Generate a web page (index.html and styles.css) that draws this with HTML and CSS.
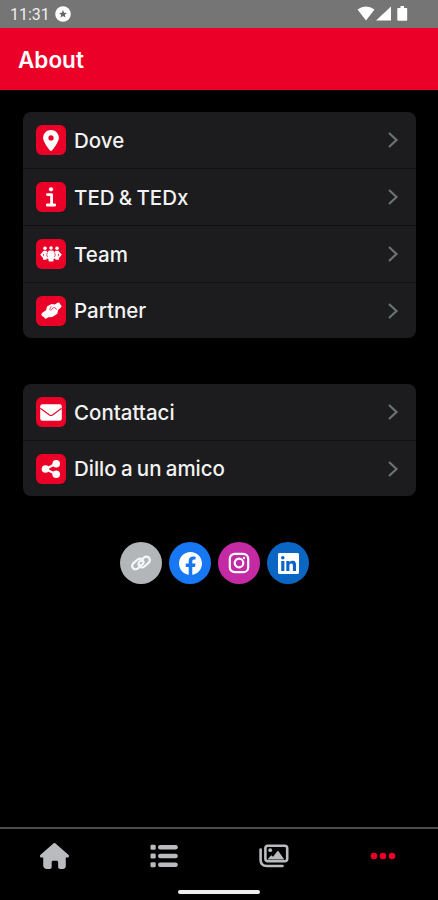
FILE: index.html
```html
<!DOCTYPE html>
<html lang="it">
<head>
    <meta charset="UTF-8">
    <meta name="viewport" content="width=device-width, initial-scale=1.0">
    <title>About</title>
    <link rel="stylesheet" href="styles.css">
</head>
<body>
    <!-- Status bar -->
    <div class="status">
        <span class="time">11:31</span>
        <svg class="star" width="16" height="16" viewBox="0 0 16 16">
            <circle cx="8" cy="8" r="7.8" fill="#fff"/>
            <path d="M8 4l1.100 2.700 2.900.2-2.200 1.900.7 2.800L8 10.100l-2.500 1.500.7-2.800L4 6.900l2.900-.2z" fill="#666"/>
        </svg>
        <svg class="signals" width="52" height="18" viewBox="0 0 52 18">
            <path d="M.5 4.500Q9 -1.500 17.500 4.500L9 15.500z"/>
            <path d="M34 1.500V15.500H19z"/>
            <path d="M41 3h2.500V1h3.500v2h2.500q.7 0 .7.700v11.100q0 1-1 1h-7.900q-1 0-1-1V3.700q0-.7.700-.7z"/>
        </svg>
    </div>

    <header class="header">
        <h1>About</h1>
    </header>

    <main class="content">
        <div class="card">
            <div class="row">
                <span class="icon">
                    <svg width="16" height="21" viewBox="0 0 384 512"><path d="M192 0C86 0 0 86 0 192c0 87 117 243 168 307 12 15 36 15 48 0 51-64 168-220 168-307C384 86 298 0 192 0zm0 256a64 64 0 1 1 0-128 64 64 0 1 1 0 128z"/></svg>
                </span>
                <span class="label">Dove</span>
                <svg class="chevron" width="12" height="18" viewBox="0 0 12 18"><path d="M2 2l7.500 7L2 16"/></svg>
            </div>
            <div class="row">
                <span class="icon">
                    <svg width="10" height="20" viewBox="0 0 10 20"><circle cx="5" cy="2.300" r="2.100"/><path d="M1.400 7.600h4.200V17.700M1.200 18h7.600" fill="none" stroke="#fff" stroke-width="2.800" stroke-linecap="round" stroke-linejoin="round"/></svg>
                </span>
                <span class="label">TED &amp; TEDx</span>
                <svg class="chevron" width="12" height="18" viewBox="0 0 12 18"><path d="M2 2l7.500 7L2 16"/></svg>
            </div>
            <div class="row">
                <span class="icon">
                    <svg width="22" height="16" viewBox="0 0 22 16">
                        <circle cx="5" cy="2.200" r="1.800"/><circle cx="11" cy="2" r="1.800"/><circle cx="17" cy="2.200" r="1.800"/>
                        <path d="M3.600 4.800h2.800l1.200 1.400 1.400-1.600h4l1.400 1.600 1.200-1.400h2.800L21.800 8.800 19 12v1.200q0 .6-.6.600h-2.800l-.7-1.600-1.400 1v1.600q0 .7-.7.700H9.200q-.7 0-.7-.7v-1.600l-1.400-1-.7 1.600H3.600q-.6 0-.6-.6V12L.2 8.800z"/>
                        <path d="M7.500 6.500L6.600 9l1.100 2M14.500 6.500l.9 2.500-1.100 2M3.500 7.800v2.400M18.500 7.800v2.400" fill="none" stroke="#eb0028" stroke-width=".7"/>
                    </svg>
                </span>
                <span class="label">Team</span>
                <svg class="chevron" width="12" height="18" viewBox="0 0 12 18"><path d="M2 2l7.500 7L2 16"/></svg>
            </div>
            <div class="row">
                <span class="icon">
                    <svg width="21" height="17" viewBox="0 0 21 17">
                        <path d="M1.700 10.600l3.300-2.400L6 4.400l4.500-2.500 3.200.5L16.600.7q1.900-.7 2.300 1.100.3.900 1 1.200 1.200 1.300-.2 2.700l-2.600 2.200-.8 3.800-5 3.400-3.700.2-2.500 1.300q-1.800.3-1.900-1.400Q.2 14 .4 12.600q.3-1.300 1.300-2z"/>
                        <path d="M10.200 4.200L8.700 7.500q.5 1.300 1.900.4l1.100-1.900 2.400-.4 1.400 2.200" fill="none" stroke="#eb0028" stroke-width=".7"/>
                    </svg>
                </span>
                <span class="label">Partner</span>
                <svg class="chevron" width="12" height="18" viewBox="0 0 12 18"><path d="M2 2l7.500 7L2 16"/></svg>
            </div>
        </div>

        <div class="card">
            <div class="row">
                <span class="icon">
                    <svg width="22" height="17" viewBox="0 0 22 17"><rect x=".2" y=".3" width="21.600" height="16.400" rx="2.200"/><path d="M.3 4.300L9.500 11q1.500 1 3 0L21.700 4.300" fill="none" stroke="#eb0028" stroke-width="1.100"/></svg>
                </span>
                <span class="label">Contattaci</span>
                <svg class="chevron" width="12" height="18" viewBox="0 0 12 18"><path d="M2 2l7.500 7L2 16"/></svg>
            </div>
            <div class="row">
                <span class="icon">
                    <svg width="20" height="20" viewBox="0 0 20 20"><circle cx="4.500" cy="10" r="3.800"/><circle cx="15.200" cy="4.700" r="3.800"/><circle cx="15.200" cy="15.300" r="3.800"/><path d="M15 4.800L4.500 10 15 15.200" fill="none" stroke="#fff" stroke-width="2.200"/></svg>
                </span>
                <span class="label">Dillo a un amico</span>
                <svg class="chevron" width="12" height="18" viewBox="0 0 12 18"><path d="M2 2l7.500 7L2 16"/></svg>
            </div>
        </div>

        <!-- Social links -->
        <div class="socials">
            <a class="social link">
                <svg width="24" height="24" viewBox="0 0 24 24"><g fill="none" stroke="#f6f6f6" stroke-width="2.200" stroke-linecap="round"><path d="M11.300 15.300l-2 1.900q-2.500 2-5 .3-2.300-2.300-.3-4.900l4.600-4.100q2.600-2 4.900.1 1.900 2.300.2 4.600-1 1-2.100.9"/><path d="M12.700 8.700l2-1.900q2.500-2 5-.3 2.300 2.300.3 4.900l-4.600 4.100q-2.600 2-4.900-.1-1.900-2.300-.2-4.600 1-1 2.100-.9"/></g></svg>
            </a>
            <a class="social facebook">
                <svg width="23" height="23" viewBox="0 0 24 24"><path fill="#fff" d="M24 12.070C24 5.440 18.630.070 12 .070S0 5.440 0 12.070c0 5.990 4.390 10.950 10.130 11.860v-8.390H7.080v-3.470h3.050V9.430c0-3.010 1.790-4.670 4.530-4.670 1.310 0 2.680.23 2.680.23v2.960h-1.510c-1.490 0-1.960.93-1.960 1.870v2.250h3.330l-.53 3.470h-2.800v8.390C19.610 23.020 24 18.060 24 12.070z"/></svg>
            </a>
            <a class="social instagram">
                <svg width="22" height="22" viewBox="0 0 22 22"><g fill="none" stroke="#fff" stroke-width="2.200"><rect x="1.800" y="1.800" width="18.400" height="18.400" rx="5"/><circle cx="11" cy="11" r="4.300"/></g><circle cx="16" cy="6" r="1.200" fill="#fff"/></svg>
            </a>
            <a class="social linkedin">
                <svg width="21" height="21" viewBox="0 0 448 448"><path fill="#fff" d="M416 0H32C14 0 0 15 0 32v384c0 17 14 32 32 32h384c18 0 32-15 32-32V32c0-17-14-32-32-32zM135 384H69V170h67v214zm-33-243a38.500 38.500 0 1 1 0-77 38.500 38.500 0 0 1 0 77zm282 243h-66V280c0-25-1-57-35-57-35 0-40 27-40 55v106h-66V170h64v29h1c9-17 31-35 63-35 67 0 80 44 80 102z"/></svg>
            </a>
        </div>
    </main>

    <!-- Bottom navigation -->
    <nav class="tabs">
        <a class="tab">
            <svg width="29" height="26" viewBox="0 0 576 512"><path d="M576 256c0 18-15 32-32 32h-32l1 160c0 35-21 64-57 64h-56c-22 0-40-18-40-40v-88c0-18-14-32-32-32h-64c-18 0-32 14-32 32v88c0 22-18 40-40 40h-56c-40 0-72-29-72-64V288H32c-18 0-32-14-32-32 0-9 3-17 10-24L266 8c7-7 15-8 22-8s15 2 21 7l255 225c8 7 12 15 12 24z"/></svg>
        </a>
        <a class="tab">
            <svg width="28" height="24" viewBox="0 0 28 24"><rect x=".5" y=".7" width="5.200" height="5" rx="1.200"/><rect x=".5" y="9.500" width="5.200" height="5" rx="1.200"/><rect x=".5" y="18.300" width="5.200" height="5" rx="1.200"/><rect x="8" y="1" width="19.800" height="4.400" rx="2.200"/><rect x="8" y="9.800" width="19.800" height="4.400" rx="2.200"/><rect x="8" y="18.600" width="19.800" height="4.400" rx="2.200"/></svg>
        </a>
        <a class="tab">
            <svg width="30" height="24" viewBox="0 0 30 24"><g fill="none" stroke="#b9bbbe" stroke-width="2.600" stroke-linecap="round"><rect x="6.400" y="1.700" width="21.800" height="15.600" rx="2.500"/><path d="M1.600 5.500v10.200q0 6.300 6.300 6.300h15.600"/></g><circle cx="11.200" cy="6.200" r="1.900"/><path d="M8.300 15.500l4-4.300 1.700 1.500 4.300-5.500q.6-.7 1.200 0l5.800 8.300z"/></svg>
        </a>
        <a class="tab active">
            <svg width="26" height="8" viewBox="0 0 26 8"><circle cx="4" cy="4" r="3.300"/><circle cx="13" cy="4" r="3.300"/><circle cx="22" cy="4" r="3.300"/></svg>
        </a>
    </nav>
    <div class="home-bar"><span></span></div>
</body>
</html>
```
FILE: styles.css
```css
* {
    box-sizing: border-box;
}
body {
    margin: 0;
    height: 900px;
    display: flex;
    flex-direction: column;
    overflow: hidden;
    background-color: #000;
    color: #f2f2f2;
    font-family: Inter, sans-serif;
}
svg {
    display: block;
    flex: none;
}
.status {
    display: flex;
    align-items: center;
    height: 28px;
    padding: 0 29px 0 10px;
    background-color: #757575;
}
.time {
    width: 45px;
    font-family: Roboto, sans-serif;
    font-size: 16px;
    color: #eee;
}
.signals {
    margin-left: auto;
    fill: #fff;
}
.header {
    display: flex;
    align-items: center;
    height: 62px;
    padding-left: 18px;
    background-color: #eb0028;
}
h1 {
    margin: 0;
    font-size: 22.5px;
    font-weight: 600;
    color: #fff;
}
.content {
    flex: 1;
    padding: 22px 22px 0 23px;
}
.card {
    margin-bottom: 46px;
    border-radius: 8px;
    background-color: #1c1c1e;
}
.row {
    display: flex;
    align-items: center;
    height: 57px;
    padding: 0 17px 0 13px;
    border-bottom: 1px solid #111113;
}
.row:last-child {
    height: 55px;
    border-bottom: none;
}
.icon {
    display: flex;
    align-items: center;
    justify-content: center;
    width: 30px;
    height: 30px;
    margin-right: 8px;
    border-radius: 6px;
    background-color: #eb0028;
    fill: #fff;
}
.label {
    flex: 1;
    font-size: 20.5px;
    font-weight: 500;
    word-spacing: -1.2px;
}
.chevron {
    fill: none;
    stroke: #6b7272;
    stroke-width: 2.2;
}
.socials {
    display: flex;
    justify-content: center;
    gap: 7px;
    margin-right: 10px;
}
.social {
    display: flex;
    align-items: center;
    justify-content: center;
    width: 42px;
    height: 42px;
    border-radius: 50%;
}
.link {
    background-color: #b2b6b8;
}
.facebook {
    background-color: #1877f2;
}
.instagram {
    background-color: #c32aa3;
}
.linkedin {
    background-color: #0a66c2;
}
.tabs {
    display: flex;
    height: 59px;
    padding-bottom: 4px;
    border-top: 2px solid #4b4b4b;
}
.tab {
    flex: 1;
    display: flex;
    align-items: center;
    justify-content: center;
    fill: #b9bbbe;
}
.active {
    fill: #eb0028;
}
.home-bar {
    display: flex;
    justify-content: center;
    height: 14px;
    padding-top: 4px;
}
.home-bar span {
    width: 82px;
    height: 4px;
    border-radius: 2px;
    background-color: #eee;
}
```
